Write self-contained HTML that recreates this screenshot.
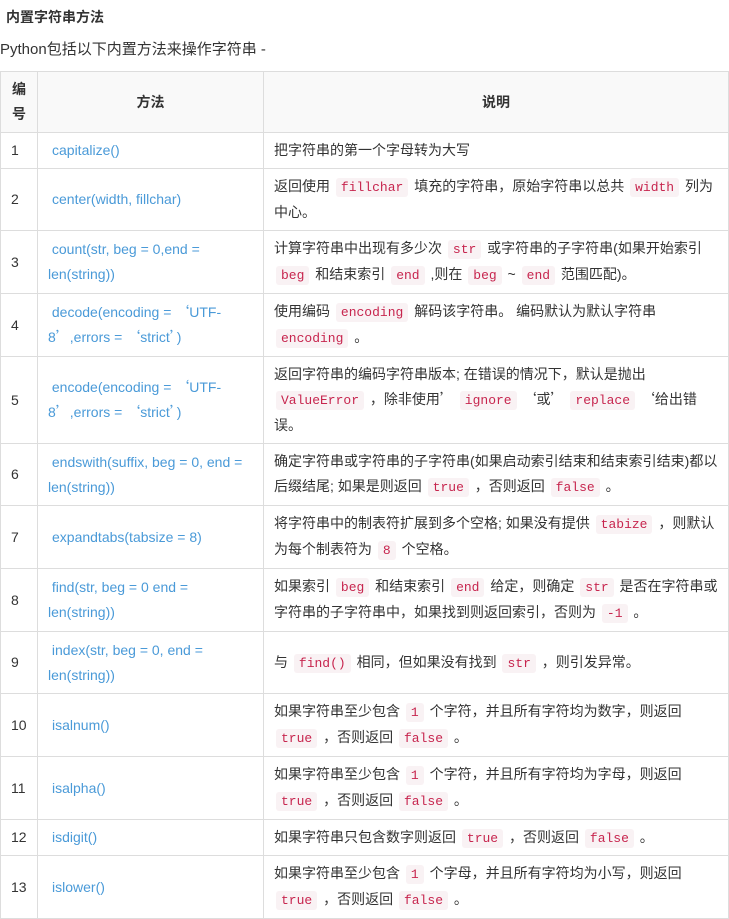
<!DOCTYPE html>
<html><head><meta charset="utf-8"><style>
body{margin:0;background:#fff;font-family:"Liberation Sans","Noto Sans CJK SC",sans-serif;color:#333;width:729px;height:912px;overflow:hidden}
h4{margin:0;position:absolute;left:6px;top:7px;font-size:14px;font-weight:bold;line-height:20px}
p{margin:0;position:absolute;left:0;top:39px;font-size:15px;line-height:22px}
table{position:absolute;left:0;top:71px;border-collapse:collapse;table-layout:fixed;width:728px;font-size:14px}
td,th{border:1px solid #ddd;line-height:25px;padding:0 10px;vertical-align:middle}
th{background:#f9f9f9;font-weight:bold;text-align:center}
td:nth-child(2){color:#4a9ad8;padding-left:14px}
code{font-family:"Liberation Mono",monospace;font-size:13px;color:#c7254e;background:#f9f2f4;padding:2px 5px;border-radius:3px;margin:0 2px}
.q{font-family:"Noto Sans CJK SC",sans-serif}
</style></head><body>
<h4>内置字符串方法</h4>
<p>Python包括以下内置方法来操作字符串 -</p>
<table>
<colgroup><col style="width:37px"><col style="width:226px"><col style="width:465px"></colgroup>
<tr style="height:61px"><th style="padding:0 10px">编号</th><th>方法</th><th>说明</th></tr>
<tr style="height:36px"><td>1</td><td>capitalize()</td><td>把字符串的第一个字母转为大写</td></tr>
<tr style="height:62px"><td>2</td><td>center(width, fillchar)</td><td>返回使用 <code>fillchar</code> 填充的字符串，原始字符串以总共 <code>width</code> 列为中心。</td></tr>
<tr style="height:63px"><td>3</td><td style="padding-left:10px">&nbsp;count(str, beg = 0,end = len(string))</td><td>计算字符串中出现有多少次 <code>str</code> 或字符串的子字符串(如果开始索引 <code>beg</code> 和结束索引 <code>end</code> ,则在 <code>beg</code> ~ <code>end</code> 范围匹配)。</td></tr>
<tr style="height:63px"><td>4</td><td style="padding-left:10px">&nbsp;decode(encoding = <span class="q">‘</span>UTF-8<span class="q">’</span>,errors = <span class="q">‘</span>strict<span class="q">’</span>)</td><td>使用编码 <code>encoding</code> 解码该字符串。 编码默认为默认字符串 <code>encoding</code> 。</td></tr>
<tr style="height:87px"><td>5</td><td style="padding-left:10px">&nbsp;encode(encoding = <span class="q">‘</span>UTF-8<span class="q">’</span>,errors = <span class="q">‘</span>strict<span class="q">’</span>)</td><td>返回字符串的编码字符串版本; 在错误的情况下，默认是抛出 <code>ValueError</code> ，除非使用<span class="q">’</span> <code>ignore</code> <span class="q">‘</span>或<span class="q">’</span> <code>replace</code> <span class="q">‘</span>给出错<br>误。</td></tr>
<tr style="height:62px"><td>6</td><td style="padding-left:10px">&nbsp;endswith(suffix, beg = 0, end = len(string))</td><td>确定字符串或字符串的子字符串(如果启动索引结束和结束索引结束)都以后缀结尾; 如果是则返回 <code>true</code> ，否则返回 <code>false</code> 。</td></tr>
<tr style="height:63px"><td>7</td><td>expandtabs(tabsize = 8)</td><td>将字符串中的制表符扩展到多个空格; 如果没有提供 <code>tabize</code> ，则默认为每个制表符为 <code>8</code> 个空格。</td></tr>
<tr style="height:63px"><td>8</td><td style="padding-left:10px">&nbsp;find(str, beg = 0 end = len(string))</td><td>如果索引 <code>beg</code> 和结束索引 <code>end</code> 给定，则确定 <code>str</code> 是否在字符串或字符串的子字符串中，如果找到则返回索引，否则为 <code>-1</code> 。</td></tr>
<tr style="height:62px"><td>9</td><td style="padding-left:10px">&nbsp;index(str, beg = 0, end = len(string))</td><td>与 <code>find()</code> 相同，但如果没有找到 <code>str</code> ，则引发异常。</td></tr>
<tr style="height:63px"><td>10</td><td>isalnum()</td><td>如果字符串至少包含 <code>1</code> 个字符，并且所有字符均为数字，则返回 <code>true</code> ，否则返回 <code>false</code> 。</td></tr>
<tr style="height:63px"><td>11</td><td>isalpha()</td><td>如果字符串至少包含 <code>1</code> 个字符，并且所有字符均为字母，则返回 <code>true</code> ，否则返回 <code>false</code> 。</td></tr>
<tr style="height:36px"><td>12</td><td>isdigit()</td><td>如果字符串只包含数字则返回 <code>true</code> ，否则返回 <code>false</code> 。</td></tr>
<tr style="height:63px"><td>13</td><td>islower()</td><td>如果字符串至少包含 <code>1</code> 个字母，并且所有字符均为小写，则返回 <code>true</code> ，否则返回 <code>false</code> 。</td></tr>
</table>
</body></html>
